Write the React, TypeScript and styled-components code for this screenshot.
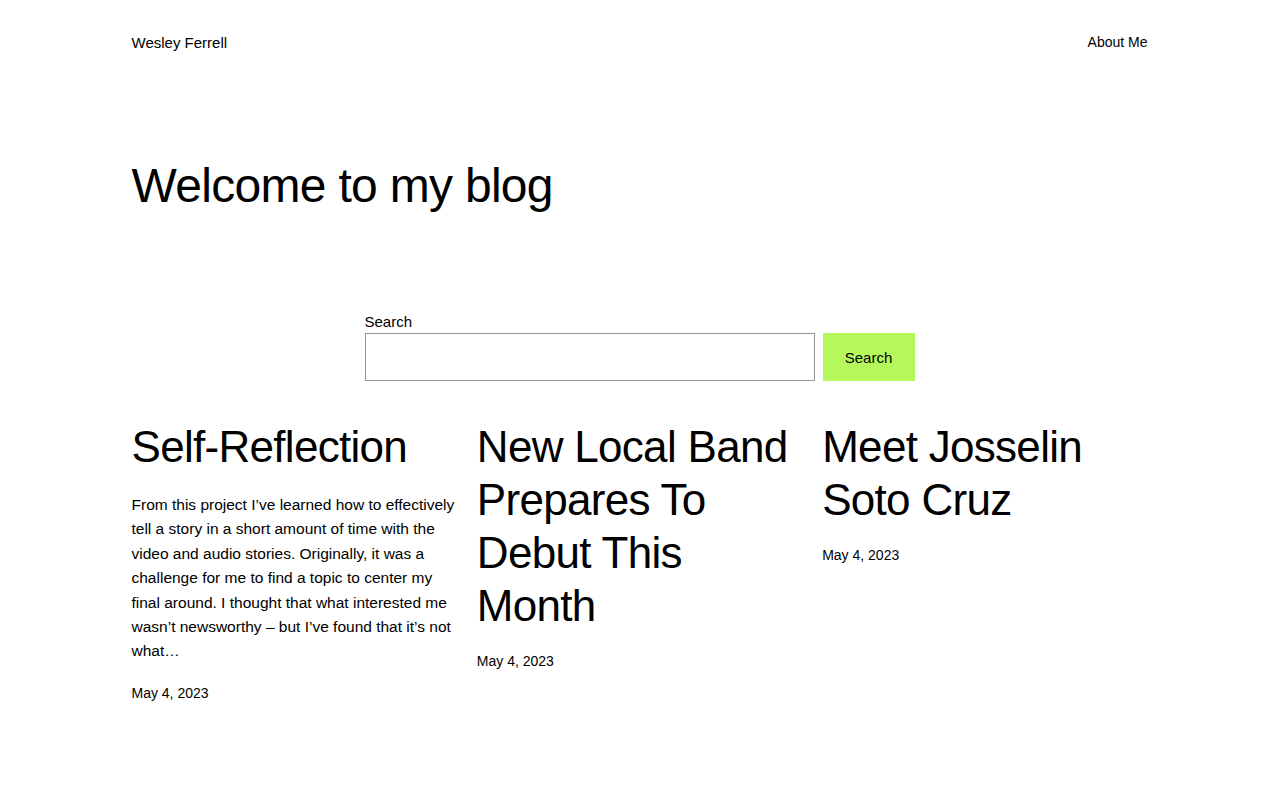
import React from "react";
import styled, { createGlobalStyle } from "styled-components";

const GlobalStyle = createGlobalStyle`
  html, body {
    margin: 0;
    padding: 0;
    background: #fff;
  }
  body {
    font-family: "Liberation Sans", Arial, sans-serif;
    color: #000;
    -webkit-font-smoothing: antialiased;
  }
`;

type Post = {
  title: string;
  excerpt?: string;
  date: string;
};

const posts: Post[] = [
  {
    title: "Self-Reflection",
    excerpt:
      "From this project I\u2019ve learned how to effectively tell a story in a short amount of time with the video and audio stories. Originally, it was a challenge for me to find a topic to center my final around. I thought that what interested me wasn\u2019t newsworthy \u2013 but I\u2019ve found that it\u2019s not what\u2026",
    date: "May 4, 2023",
  },
  { title: "New Local Band Prepares To Debut This Month", date: "May 4, 2023" },
  { title: "Meet Josselin Soto Cruz", date: "May 4, 2023" },
];

export default function App() {
  return (
    <Page>
      <GlobalStyle />
      <Header>
        <SiteTitle href="#">Wesley Ferrell</SiteTitle>
        <Nav>
          <NavLink href="#">About Me</NavLink>
        </Nav>
      </Header>
      <Main>
        <PageTitle>Welcome to my blog</PageTitle>
        <SearchForm onSubmit={(e) => e.preventDefault()}>
          <SearchLabel htmlFor="search">Search</SearchLabel>
          <SearchRow>
            <SearchInput id="search" type="search" />
            <SearchButton type="submit">Search</SearchButton>
          </SearchRow>
        </SearchForm>
        <PostGrid>
          {posts.map((post) => (
            <PostCard key={post.title}>
              <PostTitle>{post.title}</PostTitle>
              {post.excerpt && <Excerpt>{post.excerpt}</Excerpt>}
              <PostDate>{post.date}</PostDate>
            </PostCard>
          ))}
        </PostGrid>
      </Main>
    </Page>
  );
}

const Page = styled.div`
  max-width: 1016px;
  margin: 0 auto;
  padding: 0 0 80px;
`;

const Header = styled.header`
  display: flex;
  align-items: center;
  justify-content: space-between;
  height: 84px;
`;

const SiteTitle = styled.a`
  font-size: 15px;
  color: #000;
  text-decoration: none;
`;

const Nav = styled.nav`
  display: flex;
  gap: 24px;
`;

const NavLink = styled.a`
  font-size: 14px;
  color: #000;
  text-decoration: none;
`;

const Main = styled.main`
  display: flex;
  flex-direction: column;
`;

const PageTitle = styled.h1`
  margin: 70px 0 0;
  font-size: 48px;
  font-weight: 400;
  line-height: 64px;
  letter-spacing: -0.7px;
`;

const SearchForm = styled.form`
  align-self: center;
  width: 550px;
  margin-top: 94px;
  display: flex;
  flex-direction: column;
  gap: 1px;
`;

const SearchLabel = styled.label`
  font-size: 15px;
  line-height: 20px;
`;

const SearchRow = styled.div`
  display: flex;
  gap: 8px;
`;

const SearchInput = styled.input`
  flex: 1;
  height: 48px;
  box-sizing: border-box;
  border: 1px solid #949494;
  margin: 0;
  padding: 0 12px;
  font-size: 16px;
  font-family: inherit;
`;

const SearchButton = styled.button`
  width: 92px;
  height: 48px;
  border: none;
  background: #b4f85c;
  color: #000;
  font-family: inherit;
  font-size: 15px;
  cursor: pointer;
`;

const PostGrid = styled.div`
  display: grid;
  grid-template-columns: repeat(3, 1fr);
  gap: 20px;
  margin-top: 39px;
`;

const PostCard = styled.article`
  display: flex;
  flex-direction: column;
  align-items: flex-start;
  gap: 20px;
`;

const PostTitle = styled.h2`
  margin: 0;
  font-size: 44px;
  font-weight: 400;
  line-height: 53px;
  letter-spacing: -0.7px;
`;

const Excerpt = styled.p`
  margin: 0;
  font-size: 15.5px;
  line-height: 24.4px;
`;

const PostDate = styled.time`
  font-size: 14px;
  line-height: 20px;
  margin-top: -1px;
`;
